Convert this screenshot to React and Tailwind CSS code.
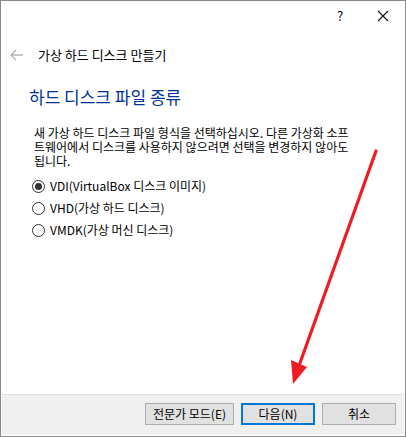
import React from "react";

const KR = { fontFamily: '"Noto Sans CJK KR", "Liberation Sans", sans-serif' };

function Radio({ checked, label }) {
  return (
    <div className="flex items-center h-[22px]">
      <span className="w-[13px] h-[13px] rounded-full border border-[#333] bg-white flex items-center justify-center ml-[30px]">
        {checked && <span className="w-[7px] h-[7px] rounded-full bg-[#333]" />}
      </span>
      <span className="ml-[5px] text-[12px] text-black leading-[16px]">{label}</span>
    </div>
  );
}

export default function App() {
  return (
    <div
      className="relative w-[406px] h-[437px] border border-[#8a8a8a] bg-white p-px flex flex-col overflow-hidden"
      style={KR}
    >
      <div className="flex-1 bg-white flex flex-col">
        <div className="h-[28px] flex items-center justify-end">
          <span className="text-[13px] text-black w-[14px] text-center mr-[30px]">?</span>
          <svg width="12" height="12" viewBox="0 0 12 12" className="mr-[15px]">
            <path d="M1 1 L11 11 M11 1 L1 11" stroke="#111" strokeWidth="1.1" />
          </svg>
        </div>
        <div className="mt-[17px] h-[16px] flex items-center">
          <svg width="14" height="12" viewBox="0 0 14 12" className="ml-[8px]">
            <path d="M1 6 H13 M6 1 L1 6 L6 11" stroke="#b5b5b5" strokeWidth="1.4" fill="none" />
          </svg>
          <span className="ml-[14px] text-[13px] leading-[16px] text-black">가상 하드 디스크 만들기</span>
        </div>
        <div className="mt-[23px] ml-[27px] text-[17px] leading-[22px] text-[#003399]">
          하드 디스크 파일 종류
        </div>
        <div className="mt-[18px] ml-[32px] flex flex-col text-[12px] text-black whitespace-nowrap">
          <div className="h-[14px] leading-[14px]">새 가상 하드 디스크 파일 형식을 선택하십시오. 다른 가상화 소프</div>
          <div className="h-[14px] leading-[14px]">트웨어에서 디스크를 사용하지 않으려면 선택을 변경하지 않아도</div>
          <div className="h-[14px] leading-[14px]">됩니다.</div>
        </div>
        <div className="mt-[7px] flex flex-col">
          <Radio checked label="VDI(VirtualBox 디스크 이미지)" />
          <Radio label="VHD(가상 하드 디스크)" />
          <Radio label="VMDK(가상 머신 디스크)" />
        </div>
      </div>
      <div className="h-[41px] border-t border-[#dfdfdf] bg-[#f0f0f0] flex items-start justify-end pt-[8px] pr-[8px] gap-[7px]">
        <button className="w-[89px] h-[22px] border border-[#adadad] bg-[#e1e1e1] text-[12px] leading-[20px] text-black">
          전문가 모드(E)
        </button>
        <button className="w-[74px] h-[22px] border-2 border-[#0078d7] bg-[#e1e1e1] text-[12px] leading-[18px] text-black">
          다음(N)
        </button>
        <button className="w-[74px] h-[22px] border border-[#adadad] bg-[#e1e1e1] text-[12px] leading-[20px] text-black">
          취소
        </button>
      </div>
      <svg
        className="absolute left-0 top-0 pointer-events-none"
        width="406"
        height="437"
        viewBox="0 0 406 437"
      >
        <path d="M375 150 L299 362" stroke="#ee1c24" strokeWidth="3.2" strokeLinecap="round" fill="none" />
        <path d="M290 359 L306 366 L292 383 Z" fill="#ee1c24" />
      </svg>
    </div>
  );
}
